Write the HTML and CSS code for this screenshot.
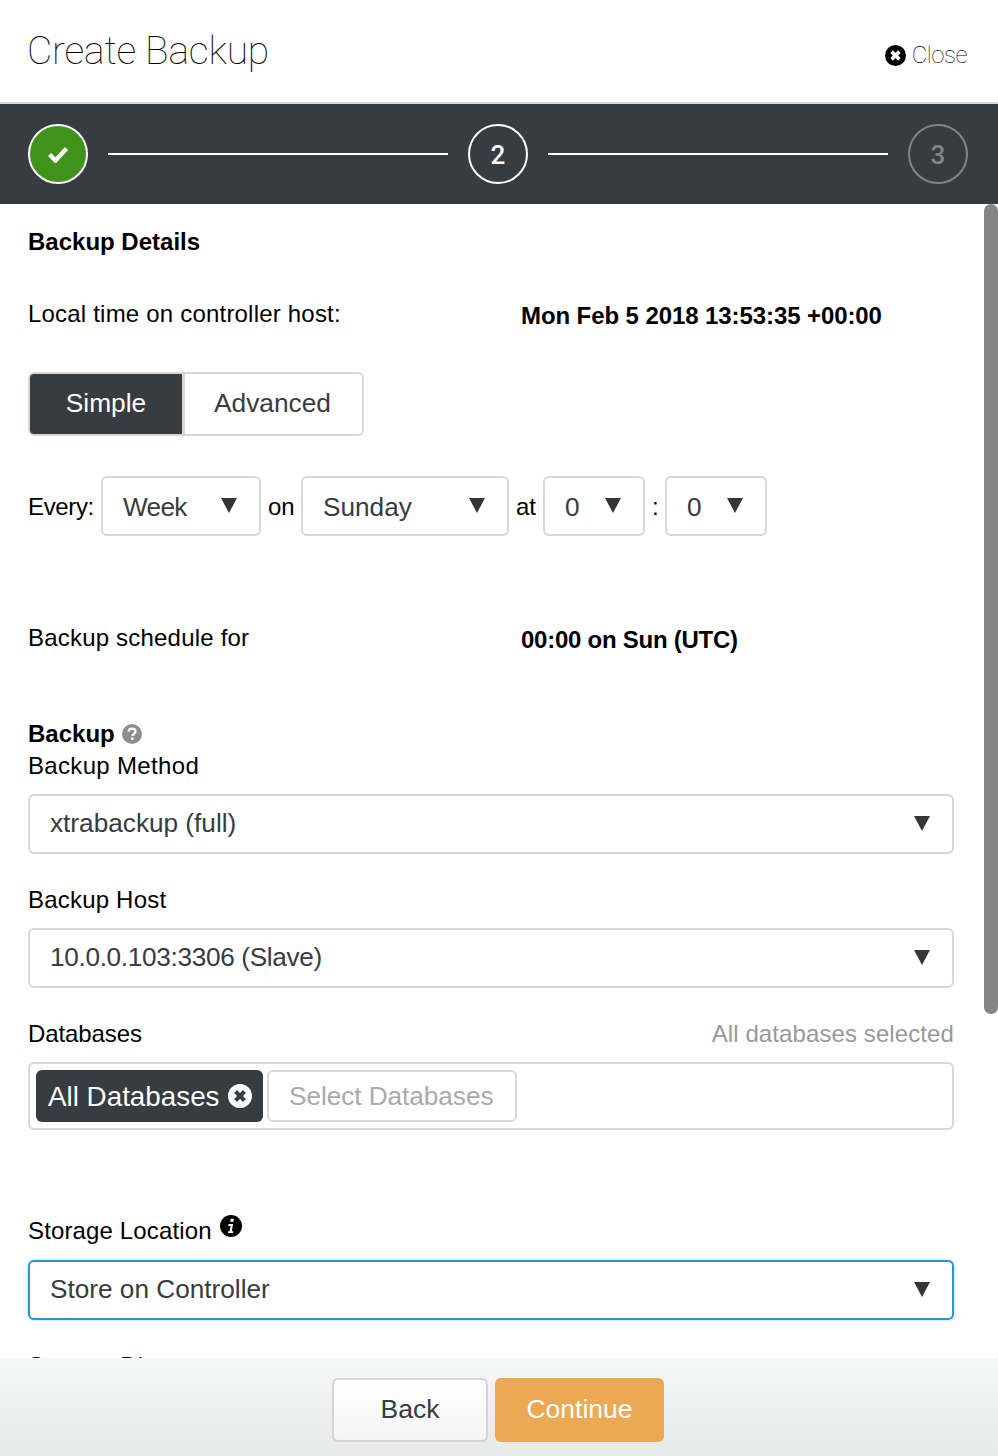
FILE: index.html
```html
<!DOCTYPE html>
<html lang="en">
<head>
<meta charset="utf-8">
<title>Create Backup</title>
<link rel="stylesheet" href="styles.css">
</head>
<body>
<div class="app">
  <header class="header">
    <h1 class="title">Create Backup</h1>
    <a class="close">
      <svg class="close-icon" viewBox="0 0 20 20"><circle cx="10" cy="10" r="10" fill="#000"/><path d="M6.3 6.3l7.4 7.4M13.7 6.3l-7.4 7.4" stroke="#fff" stroke-width="3.4" fill="none"/></svg>
      <span>Close</span>
    </a>
  </header>
  <nav class="stepper">
    <div class="step step-done">
      <svg class="check" viewBox="0 0 22 18"><path d="M2.5 9.5l6 6L19.5 3.5" stroke="#fff" stroke-width="4.4" fill="none"/></svg>
    </div>
    <div class="step-line"></div>
    <div class="step">2</div>
    <div class="step-line"></div>
    <div class="step step-off">3</div>
  </nav>
  <main class="content">
    <div class="scroll-thumb"></div>
    <div class="row-text heading first">Backup Details</div>
    <div class="row-text kv local-time"><span class="kv-label">Local time on controller host:</span><strong class="kv-value">Mon Feb 5 2018 13:53:35 +00:00</strong></div>
    <div class="toggle">
      <div class="toggle-on">Simple</div>
      <div class="toggle-off">Advanced</div>
    </div>
    <div class="every">
      <span class="word every-label">Every:</span>
      <div class="select sel-week"><span class="tight">Week</span><i class="tri"></i></div>
      <span class="word word-on">on</span>
      <div class="select sel-day"><span>Sunday</span><i class="tri"></i></div>
      <span class="word word-at">at</span>
      <div class="select sel-num"><span>0</span><i class="tri"></i></div>
      <span class="word word-colon">:</span>
      <div class="select sel-num"><span>0</span><i class="tri"></i></div>
    </div>
    <div class="row-text kv schedule"><span class="kv-label">Backup schedule for</span><strong class="kv-value">00:00 on Sun (UTC)</strong></div>
    <div class="row-text heading backup-title">Backup
      <svg class="help" viewBox="0 0 20 20"><circle cx="10" cy="10" r="10" fill="#8e8e8e"/><path d="M6.6 7.6c.2-2 1.600-3 3.500-3 2 0 3.400 1.200 3.400 2.900 0 2.400-3.100 2.500-3.100 4.500" stroke="#fff" stroke-width="2.300" fill="none"/><path d="M9.100 13.500h2.400v2.400H9.100z" fill="#fff"/></svg>
    </div>
    <div class="row-text method-label">Backup Method</div>
    <div class="select select-wide field"><span>xtrabackup (full)</span><i class="tri"></i></div>
    <div class="row-text gap-label">Backup Host</div>
    <div class="select select-wide field"><span class="tighter">10.0.0.103:3306 (Slave)</span><i class="tri"></i></div>
    <div class="row-text gap-label split"><span class="db-label">Databases</span><span class="muted">All databases selected</span></div>
    <div class="tagbox">
      <div class="tag"><span class="tag-text">All Databases</span>
        <svg class="tag-x" viewBox="0 0 20 20"><circle cx="10" cy="10" r="10" fill="#fff"/><path d="M6.300 6.300l7.400 7.400M13.700 6.300l-7.400 7.400" stroke="#363c3f" stroke-width="3.400" fill="none"/></svg>
      </div>
      <div class="tag-input">Select Databases</div>
    </div>
    <div class="row-text storage-label">Storage Location
      <svg class="info" viewBox="0 0 22 22"><circle cx="11" cy="11" r="11" fill="#000"/><path d="M10.700 3.800h3.200l-.5 3h-3.200zM8.500 9h4.600l-1.300 7.200h1.500l-.3 1.900H8l.3-1.900h1.300l1-5.300H8.200z" fill="#fff"/></svg>
    </div>
    <div class="select select-wide field field-focus"><span>Store on Controller</span><i class="tri"></i></div>
    <div class="row-text gap-label">Storage Directory</div>
  </main>
  <footer class="footer">
    <button class="btn btn-back">Back</button>
    <button class="btn btn-continue">Continue</button>
  </footer>
</div>
</body>
</html>
```

FILE: styles.css
```css
* { box-sizing: border-box; }
html, body { margin: 0; padding: 0; }
body {
  font-family: "Liberation Sans", Arial, sans-serif;
  font-size: 24px;
  color: #000;
  background: #fff;
}
.app {
  width: 998px;
  height: 1456px;
  display: flex;
  flex-direction: column;
  overflow: hidden;
}
.header {
  height: 104px;
  flex: none;
  border-bottom: 2px solid #d8d8d8;
  padding: 0 31px 0 27px;
  display: flex;
  justify-content: space-between;
  align-items: flex-start;
}
.title {
  margin: 27px 0 0;
  font-family: Roboto, "Liberation Sans", sans-serif;
  font-weight: 100;
  font-size: 39px;
  line-height: 48px;
  letter-spacing: -0.2px;
  color: #000;
}
.close {
  margin-top: 40px;
  display: flex;
  align-items: center;
  gap: 6px;
  font-family: Roboto, "Liberation Sans", sans-serif;
  font-weight: 100;
  font-size: 24px;
  line-height: 30px;
  letter-spacing: -0.5px;
  color: #000;
}
.close-icon { width: 21px; height: 21px; }
.stepper {
  height: 100px;
  flex: none;
  background: #363c3f;
  padding: 0 30px 0 28px;
  display: flex;
  align-items: center;
}
.step {
  width: 60px;
  height: 60px;
  flex: none;
  border: 2px solid #fff;
  border-radius: 50%;
  display: flex;
  align-items: center;
  justify-content: center;
  color: #fff;
  font-family: Roboto, "Liberation Sans", sans-serif;
  font-size: 26px;
  font-weight: 500;
  padding-top: 2px;
}
.step-done { background: #3f921a; padding-top: 0; }
.check { width: 22px; height: 18px; }
.step-off { border-color: #828588; color: #828588; }
.step-line {
  flex: 1;
  height: 2px;
  background: #fff;
  margin: 0 20px;
}
.content {
  position: relative;
  flex: 1;
  min-height: 0;
  overflow: hidden;
  padding: 0 44px 0 28px;
}
.scroll-thumb {
  position: absolute;
  top: 0;
  right: 0;
  width: 14px;
  height: 810px;
  background: #858585;
  border-radius: 7px;
}
.row-text { height: 32px; line-height: 32px; white-space: nowrap; letter-spacing: 0.2px; }
.heading { font-weight: 700; letter-spacing: 0; }
.method-label { letter-spacing: 0.33px; }
.first { margin-top: 22px; }
.kv { display: flex; }
.kv-label { width: 493px; flex: none; }
.kv-value { font-weight: 700; position: relative; top: 2px; letter-spacing: -0.09px; }
.schedule .kv-value { letter-spacing: -0.25px; }
.local-time { margin-top: 40px; }
.toggle {
  margin-top: 42px;
  width: 336px;
  height: 64px;
  border: 2px solid #d8d8d8;
  border-radius: 6px;
  display: flex;
  font-size: 26.3px;
  overflow: hidden;
}
.toggle-on {
  background: #363c3f;
  color: #fff;
  border-right: 3px solid #d8d8d8;
  width: 155px;
  padding-bottom: 2px;
  display: flex;
  align-items: center;
  justify-content: center;
}
.toggle-off {
  flex: 1;
  color: #363c3f;
  padding: 0 2px 2px 0;
  display: flex;
  align-items: center;
  justify-content: center;
}
.every {
  margin-top: 40px;
  display: flex;
  align-items: center;
  height: 60px;
}
.word { line-height: 32px; flex: none; position: relative; top: 1px; }
.every-label { width: 73px; letter-spacing: -0.35px; }
.word-on { width: 40px; padding-left: 7px; }
.word-at { width: 34px; padding-left: 7px; }
.word-colon { width: 20px; padding-left: 7px; }
.select {
  position: relative;
  height: 60px;
  flex: none;
  border: 2px solid #d8d8d8;
  border-radius: 6px;
  background: #fff;
  color: #363c3f;
  font-size: 26.2px;
  line-height: 55px;
  padding-left: 20px;
}
.every .select { line-height: 59px; }
.tight { letter-spacing: -0.7px; }
.tighter { letter-spacing: -0.33px; }
.tri {
  position: absolute;
  top: 20px;
  right: 22px;
  width: 0;
  height: 0;
  border-left: 8.500px solid transparent;
  border-right: 8.500px solid transparent;
  border-top: 15px solid #363636;
}
.sel-week { width: 160px; }
.sel-day { width: 208px; }
.sel-num { width: 102px; }
.schedule { margin-top: 86px; }
.backup-title { margin-top: 64px; display: flex; align-items: center; gap: 7px; }
.help { width: 20px; height: 20px; }
.select-wide { width: 926px; }
.field { margin-top: 12px; }
.gap-label { margin-top: 30px; }
.split { display: flex; justify-content: space-between; }
.db-label { letter-spacing: -0.1px; }
.muted { color: #999; letter-spacing: 0.1px; }
.tagbox {
  margin-top: 12px;
  height: 68px;
  border: 2px solid #d8d8d8;
  border-radius: 6px;
  padding: 6px;
  display: flex;
  gap: 4px;
  font-size: 26.2px;
}
.tag {
  width: 227px;
  height: 52px;
  background: #363c3f;
  color: #fff;
  border-radius: 6px;
  font-size: 27.8px;
  display: flex;
  align-items: center;
  padding-left: 12px;
  gap: 8px;
}
.tag-text { position: relative; top: 1px; }
.tag-x { width: 24px; height: 24px; }
.tag-input {
  width: 250px;
  height: 52px;
  border: 2px solid #d8d8d8;
  border-radius: 6px;
  color: #aaa;
  line-height: 48px;
  padding-left: 20px;
  letter-spacing: -0.05px;
}
.storage-label { margin-top: 85px; letter-spacing: 0.14px; display: flex; align-items: center; gap: 8px; }
.info { width: 22px; height: 22px; position: relative; top: -5px; }
.field-focus {
  margin-top: 13px;
  border-color: #2a94d6;
  box-shadow: 0 0 3px rgba(42, 148, 214, 0.5);
}
.footer {
  height: 98px;
  flex: none;
  background: linear-gradient(#f6f7f7, #e7e8e8);
  display: flex;
  justify-content: center;
  align-items: flex-start;
  gap: 7px;
  padding: 20px 2px 0 0;
  position: relative;
}
.btn {
  height: 64px;
  border-radius: 6px;
  font-family: "Liberation Sans", Arial, sans-serif;
  font-size: 26.5px;
  padding: 0 0 2px;
}
.btn-back {
  width: 156px;
  background: linear-gradient(#fff, #f4f4f4);
  border: 2px solid #d4d4d4;
  color: #363c3f;
}
.btn-continue {
  width: 169px;
  background: #eba954;
  border: none;
  color: #fff;
}
```
